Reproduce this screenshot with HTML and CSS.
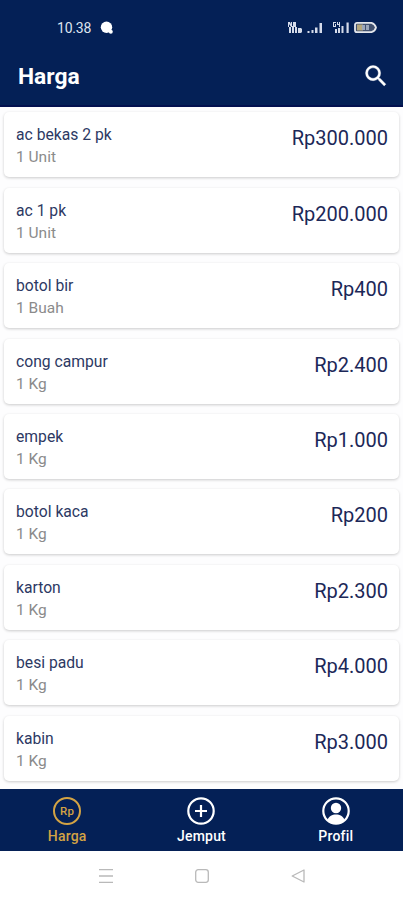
FILE: index.html
```
<!DOCTYPE html>
<html lang="id">
<head>
<meta charset="utf-8">
<title>Harga</title>
<link rel="stylesheet" href="styles.css">
</head>
<body>
<header class="header">
  <div class="status">
    <span class="time">10.38</span>
    <svg class="bubble" width="14" height="14" viewBox="0 0 14 14"><circle cx="6.500" cy="6.300" r="5.700" fill="#fff"/><circle cx="10.800" cy="10.800" r="2" fill="#fff"/></svg>
    <svg class="indicators" width="92" height="14" viewBox="0 0 92 14">
      <g fill="#d5dbea">
        <path d="M1 1h2l1 2V1h1v5H4L2 3v3H1zM6 1h3v5H6zM2 6h2v6H2zM5 5h2v7H5zM8 6h2v6H8zM11 7h3l1 1v3l-1 1h-3z"/>
        <path d="M20.500 10h2v2h-2zM24.500 9h2v3h-2zM28 6.500h2.500v5.500h-2.500zM32.500 2h2.500v10h-2.500z"/>
        <path d="M46 1h3v1h-2v3h1V3h1v3h-3zM50 1h1v2h1V1h1v5h-1V4h-2zM48 8h2v4h-2zM51 7h2v5h-2zM54.500 5h2v7h-2zM59.500 1.500h2.200v10.500h-2.200z"/>
      </g>
      <path d="M70 1.800h14.500q3.500 1 4.500 4.700-1 3.700-4.500 4.700H70a2 2 0 0 1-2-2V3.800a2 2 0 0 1 2-2z" fill="#41506f" stroke="#e4e6ec" stroke-width="1.800"/>
      <path d="M70 3.500h6v6h-6z" fill="#b5a77c"/>
      <path d="M75 4h3v5h-3zM79 4h3v5h-3z" fill="#9ba6bb"/>
    </svg>
  </div>
  <div class="appbar">
    <h1>Harga</h1>
    <svg width="28" height="28" viewBox="0 0 24 24"><path fill="#fff" stroke="#fff" stroke-width=".3" d="M15.500 14h-.79l-.28-.27A6.470 6.470 0 0 0 16 9.500 6.500 6.500 0 1 0 9.500 16c1.610 0 3.090-.59 4.230-1.570l.27.28v.79l5 4.990L20.490 19l-4.990-5zm-6 0C7.010 14 5 11.990 5 9.500S7.010 5 9.500 5 14 7.010 14 9.500 11.990 14 9.500 14z"/></svg>
  </div>
</header>
<main class="list">
  <article class="card"><div><div class="name">ac bekas 2 pk</div><div class="unit">1 Unit</div></div><div class="price">Rp300.000</div></article>
  <article class="card"><div><div class="name">ac 1 pk</div><div class="unit">1 Unit</div></div><div class="price">Rp200.000</div></article>
  <article class="card"><div><div class="name">botol bir</div><div class="unit">1 Buah</div></div><div class="price">Rp400</div></article>
  <article class="card"><div><div class="name">cong campur</div><div class="unit">1 Kg</div></div><div class="price">Rp2.400</div></article>
  <article class="card"><div><div class="name">empek</div><div class="unit">1 Kg</div></div><div class="price">Rp1.000</div></article>
  <article class="card"><div><div class="name">botol kaca</div><div class="unit">1 Kg</div></div><div class="price">Rp200</div></article>
  <article class="card"><div><div class="name">karton</div><div class="unit">1 Kg</div></div><div class="price">Rp2.300</div></article>
  <article class="card"><div><div class="name">besi padu</div><div class="unit">1 Kg</div></div><div class="price">Rp4.000</div></article>
  <article class="card"><div><div class="name">kabin</div><div class="unit">1 Kg</div></div><div class="price">Rp3.000</div></article>
</main>
<nav class="tabs">
  <a class="tab active">
    <span class="coin">Rp</span>
    <span>Harga</span>
  </a>
  <a class="tab">
    <svg width="28" height="28" viewBox="0 0 28 28" fill="none" stroke="#fff" stroke-width="2.200"><circle cx="14" cy="14" r="12.700"/><path d="M14 8v12M8 14h12"/></svg>
    <span>Jemput</span>
  </a>
  <a class="tab">
    <svg width="28" height="28" viewBox="0 0 28 28"><circle cx="14" cy="14" r="12.700" fill="none" stroke="#fff" stroke-width="2.200"/><circle cx="14" cy="11" r="5.200" fill="#fff"/><path d="M5.500 23c1.500-4 4.500-5.500 8.500-5.500s7 1.500 8.500 5.500c-2 2.500-5 4-8.500 4s-6.500-1.500-8.500-4z" fill="#fff"/></svg>
    <span>Profil</span>
  </a>
</nav>
<footer class="system">
  <svg width="16" height="16" viewBox="0 0 16 16" fill="none" stroke="#b9b9b9" stroke-width="1.300"><path d="M1 1.700h14M1 8h14M1 14.300h14"/></svg>
  <svg width="16" height="16" viewBox="0 0 16 16" fill="none" stroke="#b9b9b9" stroke-width="1.300"><rect x="1.700" y="1.700" width="12.600" height="12.600" rx="2.500"/></svg>
  <svg width="16" height="16" viewBox="0 0 16 16" fill="none" stroke="#b9b9b9" stroke-width="1.300" stroke-linejoin="round"><path d="M14 2v12L2.200 8z"/></svg>
</footer>
</body>
</html>
```
FILE: styles.css
```
* { box-sizing: border-box; }
body {
  margin: 0;
  width: 403px;
  height: 900px;
  display: flex;
  flex-direction: column;
  overflow: hidden;
  background: #fff;
  font-family: Roboto, sans-serif;
}
svg { display: block; flex: none; }
.header {
  height: 107px;
  flex: none;
  background: #042056;
  border-bottom: 2px solid #03104f;
  color: #fff;
}
.status {
  height: 48px;
  display: flex;
  align-items: center;
  padding: 7px 24px 0 57px;
}
.time { font-size: 14px; line-height: 16px; letter-spacing: -0.2px; color: #dfe4ef; }
.bubble { margin-left: 9px; }
.indicators { margin-left: auto; }
.appbar {
  height: 55px;
  display: flex;
  align-items: center;
  justify-content: space-between;
  padding: 0 13px 0 18px;
}
h1 { margin: 2px 0 0; font-size: 22.8px; line-height: 28px; font-weight: 700; }
.list {
  height: 682px;
  flex: none;
  overflow: hidden;
  padding: 5.4px 4px 0;
  display: flex;
  flex-direction: column;
  gap: 10.4px;
  background: #fdfdfe;
}
.card {
  height: 65px;
  flex: none;
  display: flex;
  justify-content: space-between;
  padding: 13px 11px 0 12px;
  border-radius: 5px;
  background: #fff;
  box-shadow: 0 1px 3px rgba(0, 0, 0, 0.2);
}
.name { font-size: 15.7px; line-height: 20px; color: #2d3963; }
.unit { margin-top: 2px; font-size: 15.5px; line-height: 20px; color: #8b8b8b; }
.price { font-size: 20px; line-height: 26px; color: #1c2858; }
.tabs {
  height: 62px;
  flex: none;
  display: flex;
  justify-content: space-around;
  background: #042056;
  color: #fff;
}
.tab {
  width: 134.3px;
  display: flex;
  flex-direction: column;
  align-items: center;
  padding-top: 8px;
  font-size: 14px;
  line-height: 18px;
  letter-spacing: 0.2px;
  font-weight: 500;
}
.tab span:last-child { margin-top: 1.500px; }
.active { color: #d3a344; }
.coin {
  width: 28px;
  height: 28px;
  border: 2.2px solid #d3a344;
  border-radius: 50%;
  font-size: 11.5px;
  line-height: 24px;
  text-align: center;
}
.system {
  height: 49px;
  flex: none;
  display: flex;
  justify-content: center;
  align-items: center;
  gap: 80px;
}
```
